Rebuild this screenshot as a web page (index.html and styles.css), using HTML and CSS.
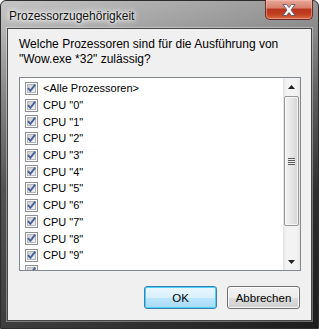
FILE: index.html
```html
<!DOCTYPE html>
<html lang="de">
<head>
  <meta charset="UTF-8">
  <title>Prozessorzugehörigkeit</title>
  <link rel="stylesheet" href="styles.css">
</head>
<body>
  <svg class="defs" width="0" height="0">
    <defs>
      <linearGradient id="boxFill" x1="0" y1="0" x2="1" y2="1">
        <stop offset="0" stop-color="#c9ccd1"/>
        <stop offset="1" stop-color="#f4f4f4"/>
      </linearGradient>
      <symbol id="chk" viewBox="0 0 13 13">
        <rect x="0.5" y="0.5" width="12" height="12" fill="#fdfdfd" stroke="#8f8f8f"/>
        <rect x="2.5" y="2.5" width="8" height="8" fill="url(#boxFill)" stroke="#b4b7bc" stroke-width="1"/>
        <path d="M3 6.2 L5.4 8.8 L10.2 2.6" fill="none" stroke="#4a5f97" stroke-width="1.9"/>
      </symbol>
    </defs>
  </svg>

  <div class="window">
    <div class="titlebar">
      <span class="title">Prozessorzugehörigkeit</span>
      <div class="close">
        <svg width="16" height="14" viewBox="0 0 16 14">
          <path d="M2 1.5 L5.5 1.5 L8 4.5 L10.5 1.5 L14 1.5 L10 7 L14 12.5 L10.5 12.5 L8 9.5 L5.5 12.5 L2 12.5 L6 7 Z" fill="#ffffff" stroke="#5a5a6a" stroke-width="0.9" stroke-linejoin="round"/>
        </svg>
      </div>
    </div>

    <div class="client">
      <p class="prompt">Welche Prozessoren sind für die Ausführung von<br>"Wow.exe *32" zulässig?</p>

      <div class="listbox">
        <ul class="items">
          <li><svg class="chk"><use href="#chk"/></svg>&lt;Alle Prozessoren&gt;</li>
          <li><svg class="chk"><use href="#chk"/></svg>CPU "0"</li>
          <li><svg class="chk"><use href="#chk"/></svg>CPU "1"</li>
          <li><svg class="chk"><use href="#chk"/></svg>CPU "2"</li>
          <li><svg class="chk"><use href="#chk"/></svg>CPU "3"</li>
          <li><svg class="chk"><use href="#chk"/></svg>CPU "4"</li>
          <li><svg class="chk"><use href="#chk"/></svg>CPU "5"</li>
          <li><svg class="chk"><use href="#chk"/></svg>CPU "6"</li>
          <li><svg class="chk"><use href="#chk"/></svg>CPU "7"</li>
          <li><svg class="chk"><use href="#chk"/></svg>CPU "8"</li>
          <li><svg class="chk"><use href="#chk"/></svg>CPU "9"</li>
          <li><svg class="chk"><use href="#chk"/></svg></li>
        </ul>
        <div class="scrollbar">
          <div class="arrow"><svg width="7" height="4" viewBox="0 0 7 4"><path d="M3.5 0 L7 4 L0 4 Z" fill="#222"/></svg></div>
          <div class="track">
            <div class="thumb"><span class="grip"></span></div>
          </div>
          <div class="arrow"><svg width="7" height="4" viewBox="0 0 7 4"><path d="M0 0 L7 0 L3.5 4 Z" fill="#222"/></svg></div>
        </div>
      </div>

      <div class="buttons">
        <button class="btn default">OK</button>
        <button class="btn">Abbrechen</button>
      </div>
    </div>
  </div>
</body>
</html>
```

FILE: styles.css
```css
body {
  margin: 0;
  font-family: "Liberation Sans", Arial, sans-serif;
  font-size: 12px;
  background: #ffffff;
}

.defs {
  position: absolute;
}

.window {
  width: 319px;
  height: 329px;
  box-sizing: border-box;
  border: 1px solid #2c2c2c;
  border-radius: 6px 6px 0 0;
  background:
    linear-gradient(to right, rgba(255,255,255,0.12), rgba(0,0,0,0.2)),
    linear-gradient(to bottom, #bdbdbd 0, #acacac 28px, #727272 100px, #3a3a3a 190px, #232323 100%);
  display: flex;
  flex-direction: column;
}

.titlebar {
  height: 27px;
  display: flex;
  align-items: flex-start;
}

.title {
  margin: 8px 0 0 8px;
  color: #111;
  line-height: 14px;
  text-shadow: 0 0 6px #fff, 0 0 10px #fff, 0 0 3px #fff;
}

.close {
  margin-left: auto;
  margin-right: 5px;
  margin-top: -1px;
  width: 48px;
  height: 20px;
  box-sizing: border-box;
  border: 1px solid #6b2a22;
  border-top: none;
  border-radius: 0 0 5px 5px;
  background: linear-gradient(to bottom, #e8a897 0, #d7826f 40%, #b8351f 50%, #c0401f 75%, #dc6a47 100%);
  box-shadow: inset 0 0 0 1px rgba(255,200,190,0.45);
  display: flex;
  align-items: center;
  justify-content: center;
}

.client {
  margin-left: 6px;
  width: 305px;
  height: 293px;
  box-sizing: border-box;
  border: 1px solid #454545;
  box-shadow: 0 0 0 1px rgba(255,255,255,0.35);
  background: #f0f0f0;
  padding: 0 11px 0 11px;
}

.prompt {
  margin: 8px 0 0 0;
  line-height: 15px;
  color: #000;
}

.listbox {
  margin-top: 10px;
  width: 282px;
  height: 194px;
  box-sizing: border-box;
  border: 1px solid #828790;
  background: #fff;
  display: flex;
  overflow: hidden;
}

.items {
  list-style: none;
  margin: 0;
  padding: 2px 0 0 5px;
  flex: 1;
  font-size: 11px;
}

.items li {
  height: 16.7px;
  display: flex;
  align-items: center;
  color: #000;
  white-space: nowrap;
}

.chk {
  width: 13px;
  height: 13px;
  margin-right: 5px;
  flex: none;
}

.scrollbar {
  width: 17px;
  display: flex;
  flex-direction: column;
  background: linear-gradient(to right, #e3e3e3, #f3f3f3 20%, #f3f3f3 80%, #e8e8e8);
}

.arrow {
  height: 17px;
  display: flex;
  align-items: center;
  justify-content: center;
}

.track {
  flex: 1;
  padding: 1px 1px 0 1px;
}

.thumb {
  height: 130px;
  box-sizing: border-box;
  border: 1px solid #979797;
  border-radius: 2px;
  background: linear-gradient(to right, #f3f3f3, #e6e6e6 50%, #d4d4d4);
  box-shadow: inset 0 0 0 1px rgba(255,255,255,0.7);
  display: flex;
  align-items: center;
  justify-content: center;
}

.grip {
  width: 7px;
  height: 7px;
  background: repeating-linear-gradient(to bottom, #5c5c5c 0, #5c5c5c 1px, #ececec 1px, #ececec 2px);
}

.buttons {
  display: flex;
  justify-content: flex-end;
  gap: 10px;
  margin-top: 15px;
}

.btn {
  width: 73px;
  height: 23px;
  font-family: "Liberation Sans", Arial, sans-serif;
  font-size: 11.5px;
  color: #000;
  border: 1px solid #707070;
  border-radius: 3px;
  background: linear-gradient(to bottom, #f2f2f2 0, #ebebeb 50%, #dddddd 50%, #cfcfcf 100%);
  box-shadow: inset 0 0 0 1px rgba(255,255,255,0.8);
  padding: 0;
}

.btn.default {
  border-color: #3c7fb1;
  background: linear-gradient(to bottom, #eaf6fd 0, #d9f0fc 50%, #bee6fd 50%, #a7d9f5 100%);
  box-shadow: inset 0 0 0 1px #48d2fb;
}
```
